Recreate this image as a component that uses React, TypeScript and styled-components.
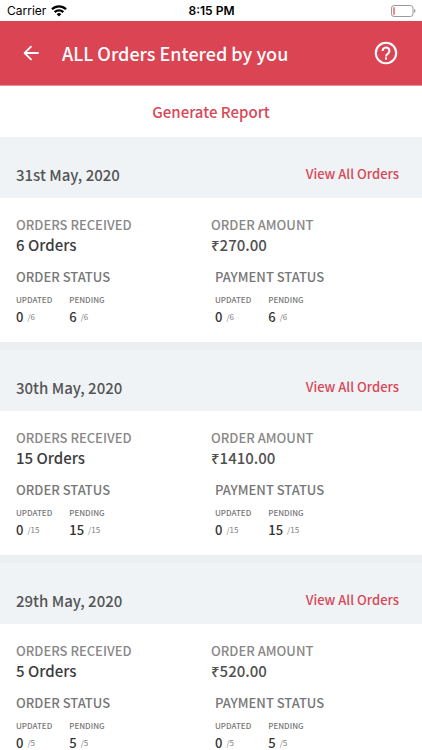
import React from "react";
import styled, { createGlobalStyle } from "styled-components";

const Global = createGlobalStyle`
  * { box-sizing: border-box; }
  html { scrollbar-width: none; }
  body {
    margin: 0;
    background: #fff;
    font-family: "Noto Sans CJK SC", "Noto Sans", sans-serif;
    font-weight: 500;
  }
  button { border: 0; padding: 0; background: none; font: inherit; color: inherit; cursor: pointer; }
  h1, h2, h3, p, dl, dt, dd { margin: 0; font: inherit; }
`;

const StatusBar = styled.div`
  display: grid;
  grid-template-columns: 1fr auto 1fr;
  align-items: center;
  height: 21px;
  padding: 0 6px 0 7px;
  color: #000;
  font-family: Inter, sans-serif;
  font-size: 12px;
  font-weight: 400;
`;

const Carrier = styled.span`
  display: flex;
  align-items: center;
  gap: 5px;
`;

const Clock = styled.span`
  font-weight: 600;
`;

const Battery = styled.svg`
  justify-self: end;
`;

const AppBar = styled.header`
  display: flex;
  align-items: center;
  height: 65px;
  padding: 0 24px 0 20px;
  background: #db4453;
  border-bottom: 1px solid #e88f98;
  color: #fff;
`;

const IconButton = styled.button`
  display: flex;
`;

const Title = styled.h1`
  flex: 1;
  margin-left: 20px;
  font-size: 18px;
  line-height: 28px;
`;

const ReportRow = styled.div`
  display: flex;
  justify-content: center;
  align-items: center;
  height: 51px;
`;

const ReportButton = styled.button`
  color: #d84857;
  font-size: 15px;
  line-height: 24px;
`;

const Day = styled.section`
  & + & { border-top: 8px solid #ebeff2; }
`;

const DayHeader = styled.div`
  display: flex;
  justify-content: space-between;
  align-items: flex-start;
  height: 61px;
  padding: 25px 23px 0 16px;
  background: #eff3f6;
`;

const DayTitle = styled.h2`
  padding-top: 1px;
  color: #555;
  font-size: 15px;
  line-height: 24px;
`;

const ViewLink = styled.a`
  color: #d84857;
  font-size: 13px;
  line-height: 24px;
  text-decoration: none;
`;

const DayBody = styled.div`
  padding: 17px 16px 15px;
`;

const Columns = styled.div<{ $inset?: boolean }>`
  display: grid;
  grid-template-columns: 1fr 1fr;
  column-gap: ${(p) => (p.$inset ? 8 : 0)}px;
`;

const Label = styled.p<{ $strong?: boolean }>`
  color: ${(p) => (p.$strong ? "#777" : "#888")};
  font-size: 13px;
  line-height: 20px;
`;

const Value = styled.p<{ $soft?: boolean }>`
  margin-bottom: 12px;
  color: ${(p) => (p.$soft ? "#505050" : "#3c3c3c")};
  font-size: 15px;
  line-height: 20px;
`;

const Counts = styled.dl`
  display: flex;
  gap: 17px;
  margin-top: 6px;
`;

const CountName = styled.dt`
  color: #777;
  font-size: 8px;
  line-height: 14px;
`;

const CountValue = styled.dd`
  display: flex;
  align-items: center;
  gap: 4px;
  color: #333;
  font-size: 13px;
  line-height: 20px;
`;

const Total = styled.span`
  color: #808080;
  font-size: 8px;
  font-weight: 400;
`;

type DayData = { date: string; orders: number; amount: string };

const days: DayData[] = [
  { date: "31st May, 2020", orders: 6, amount: "₹270.00" },
  { date: "30th May, 2020", orders: 15, amount: "₹1410.00" },
  { date: "29th May, 2020", orders: 5, amount: "₹520.00" },
];

function StatusBlock({ title, total }: { title: string; total: number }) {
  return (
    <div>
      <Label as="h3" $strong>{title}</Label>
      <Counts>
        <div>
          <CountName>UPDATED</CountName>
          <CountValue>0<Total>/{total}</Total></CountValue>
        </div>
        <div>
          <CountName>PENDING</CountName>
          <CountValue>{total}<Total>/{total}</Total></CountValue>
        </div>
      </Counts>
    </div>
  );
}

function DayCard({ date, orders, amount }: DayData) {
  return (
    <Day>
      <DayHeader>
        <DayTitle>{date}</DayTitle>
        <ViewLink href="#orders">View All Orders</ViewLink>
      </DayHeader>
      <DayBody>
        <Columns>
          <div>
            <Label>ORDERS RECEIVED</Label>
            <Value>{orders} Orders</Value>
          </div>
          <div>
            <Label>ORDER AMOUNT</Label>
            <Value $soft>{amount}</Value>
          </div>
        </Columns>
        <Columns $inset>
          <StatusBlock title="ORDER STATUS" total={orders} />
          <StatusBlock title="PAYMENT STATUS" total={orders} />
        </Columns>
      </DayBody>
    </Day>
  );
}

export default function App() {
  return (
    <>
      <Global />
      <StatusBar>
        <Carrier>
          Carrier
          <svg width="16" height="12" viewBox="0 0 16 12" fill="none" stroke="#000" strokeWidth="2.3" aria-hidden="true">
            <path d="M1 4.2a9.9 9.9 0 0 1 14 0" />
            <path d="M3.7 7.1a6.1 6.1 0 0 1 8.6 0" />
            <path d="M8 11.6 5.7 9.2a3.3 3.3 0 0 1 4.6 0z" fill="#000" stroke="none" />
          </svg>
        </Carrier>
        <Clock>8:15 PM</Clock>
        <Battery width="25" height="12" viewBox="0 0 25 12" aria-hidden="true">
          <rect x="0.5" y="0.5" width="21.5" height="11" rx="2.6" fill="none" stroke="#999" />
          <rect x="2" y="2" width="2" height="8" rx="1" fill="#ee8a8a" />
          <path d="M23.2 4v4c1.6-.6 1.6-3.4 0-4z" fill="#888" />
        </Battery>
      </StatusBar>
      <AppBar>
        <IconButton aria-label="Back">
          <svg width="22" height="22" viewBox="0 0 22 22" fill="none" stroke="#fff" strokeWidth="1.8" strokeLinecap="round" strokeLinejoin="round">
            <path d="M18 11H4.6M11 4.6 4.6 11l6.4 6.4" />
          </svg>
        </IconButton>
        <Title>ALL Orders Entered by you</Title>
        <IconButton aria-label="Help">
          <svg width="24" height="24" viewBox="0 0 24 24" fill="none" stroke="#fff" strokeWidth="2.1">
            <circle cx="12" cy="12" r="10.2" />
            <path d="M8.6 9.9a3.4 3.4 0 1 1 5.6 2.6c-1.2 1-2.2 1.4-2.2 3" />
            <path d="M12 16.4v2.2" />
          </svg>
        </IconButton>
      </AppBar>
      <main>
        <ReportRow>
          <ReportButton>Generate Report</ReportButton>
        </ReportRow>
        {days.map((day) => (
          <DayCard key={day.date} {...day} />
        ))}
      </main>
    </>
  );
}
